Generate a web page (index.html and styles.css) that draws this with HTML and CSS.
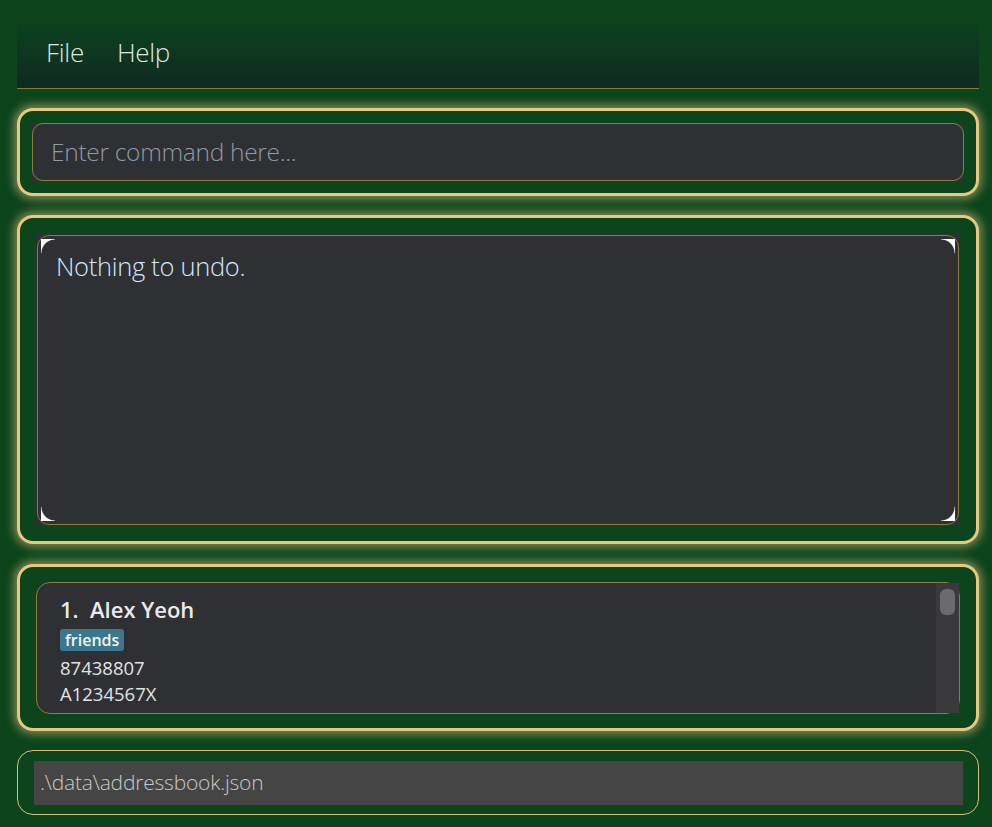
FILE: index.html
```html
<!DOCTYPE html>
<html lang="en">
<head>
<meta charset="utf-8">
<title>Address App</title>
<link rel="stylesheet" href="styles.css">
</head>
<body>
<div class="app">
  <nav class="menubar">
    <span class="menu-item">File</span>
    <span class="menu-item">Help</span>
  </nav>

  <section class="panel glow command-panel">
    <div class="field-frame">
      <div class="command-field">
        <span class="placeholder">Enter command here...</span>
      </div>
    </div>
  </section>

  <section class="panel glow result-panel">
    <div class="result-frame">
      <div class="result-area">
        <span class="corner tl"></span>
        <span class="corner tr"></span>
        <span class="corner bl"></span>
        <span class="corner br"></span>
        <p class="result-text">Nothing to undo.</p>
      </div>
    </div>
  </section>

  <section class="panel glow list-panel">
    <div class="list-frame">
      <div class="person-card">
        <div class="person-name">1.&nbsp; Alex Yeoh</div>
        <div class="tags"><span class="tag">friends</span></div>
        <div class="person-line">87438807</div>
        <div class="person-line">A1234567X</div>
      </div>
      <div class="scrollbar"><div class="thumb"></div></div>
    </div>
  </section>

  <footer class="panel status-panel">
    <div class="status-field">.\data\addressbook.json</div>
  </footer>
</div>
</body>
</html>
```

FILE: styles.css
```css
* { box-sizing: border-box; }

html, body {
  margin: 0;
  padding: 0;
  background: #0c441c;
  height: 100%;
  overflow: hidden;
}

body {
  font-family: "Open Sans", "Noto Sans", sans-serif;
}

.app {
  display: flex;
  flex-direction: column;
  padding: 20px 13px 0 17px;
  gap: 19px;
}

.menubar {
  height: 69px;
  display: flex;
  align-items: center;
  gap: 33px;
  padding: 0 0 4px 29px;
  background: linear-gradient(#0c431d, #0f2a23);
  border-bottom: 1px solid #8a7a3a;
}

.menu-item {
  color: #dfe6e0;
  font-weight: 300;
  font-size: 26px;
  letter-spacing: -0.3px;
}

.panel {
  border: 3px solid #e8c77f;
  border-radius: 16px;
  background: #0c441c;
}

.glow {
  box-shadow: 0 0 10px 3px rgba(232, 199, 127, 0.55);
}

.command-panel {
  height: 88px;
  padding: 12px;
}

.field-frame {
  height: 100%;
  background: #2f3034;
}

.command-field {
  height: 100%;
  border: 1px solid #8c7a3e;
  border-radius: 11px;
  display: flex;
  align-items: center;
  padding: 0 0 2px 18px;
}

.placeholder {
  color: #8c9aa6;
  font-weight: 300;
  font-size: 24.5px;
  letter-spacing: -0.3px;
}

.result-panel {
  height: 329px;
  padding: 16px 16px 15px 16px;
}

.result-frame {
  height: 100%;
  background: #2f3034;
  padding: 1px;
}

.result-area {
  position: relative;
  height: 100%;
  border: 1px solid #8c7a3e;
  border-radius: 12px;
  padding: 13px 18px;
}

.corner {
  position: absolute;
  width: 14px;
  height: 14px;
}
.corner.tl { top: 3px; left: 3px; background: radial-gradient(circle at 100% 100%, transparent 13px, #ffffff 14px); }
.corner.tr { top: 3px; right: 3px; background: radial-gradient(circle at 0% 100%, transparent 13px, #ffffff 14px); }
.corner.bl { bottom: 3px; left: 3px; background: radial-gradient(circle at 100% 0%, transparent 13px, #ffffff 14px); }
.corner.br { bottom: 3px; right: 3px; background: radial-gradient(circle at 0% 0%, transparent 13px, #ffffff 14px); }

.result-text {
  margin: 0;
  color: #d0e7f8;
  font-weight: 300;
  font-size: 25.5px;
  letter-spacing: -0.3px;
  line-height: 34px;
}

.list-panel {
  height: 167px;
  margin-top: 1px;
  padding: 15px 16px 14px 16px;
}

.list-frame {
  position: relative;
  height: 100%;
}

.person-card {
  height: 100%;
  background: #2f3034;
  border: 1px solid #8c7a3e;
  border-radius: 14px;
  padding: 11px 23px;
  display: flex;
  flex-direction: column;
}

.person-name {
  color: #eaeaea;
  font-weight: 600;
  font-size: 22px;
  line-height: 30px;
}

.tags {
  display: flex;
  margin: 5px 0 4px;
}

.tag {
  background: #3b788d;
  color: #f4f4f4;
  font-weight: 600;
  font-size: 16px;
  line-height: 22px;
  padding: 0 5px;
  border-radius: 3px;
}

.person-line {
  color: #e2e2e2;
  font-size: 18.5px;
  line-height: 26px;
}

.scrollbar {
  position: absolute;
  top: 1px;
  right: 1px;
  bottom: 1px;
  width: 23px;
  background: #3a3a3c;
  padding: 6px 4px;
}

.thumb {
  height: 26px;
  background: #6b6b6d;
  border-radius: 6px;
}

.status-panel {
  height: 65px;
  border-width: 1.5px;
  border-color: #d9bd7a;
  padding: 10px 15px 9px 16px;
}

.status-field {
  height: 100%;
  background: #454545;
  color: #c8c8c8;
  font-weight: 300;
  font-size: 21px;
  letter-spacing: -0.2px;
  display: flex;
  align-items: center;
  padding: 0 0 2px 6px;
}
```
